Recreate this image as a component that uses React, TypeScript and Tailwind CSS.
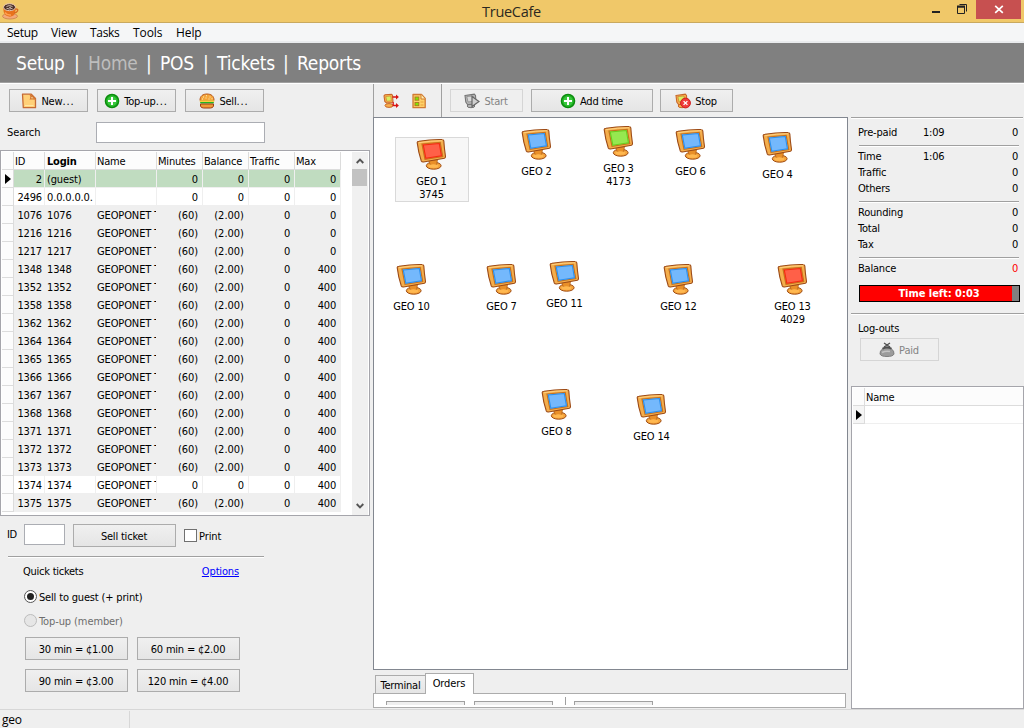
import React from "react";

type Kids = { children?: React.ReactNode };

function Monitor({ color }: { color: "red" | "blue" | "green" }) {
  const fills = {
    red: ["#ff6048", "#f42c10"],
    blue: ["#74b8fc", "#2a90f0"],
    green: ["#96e850", "#68cc20"],
  }[color];
  return (
    <svg width="32" height="32" viewBox="0 0 32 32" className="block shrink-0">
      <ellipse cx="17.700" cy="27.700" rx="7.400" ry="3.500" fill="#f5a53c" stroke="#a04c14" strokeWidth="1" />
      <path d="M12.500 22.500L21.500 21.500L20.500 27Q18 28.500 14.500 27Z" fill="#e98f28" stroke="#b8651a" strokeWidth=".8" />
      <ellipse cx="17.300" cy="28" rx="5" ry="1.800" fill="#ffb850" />
      <path d="M1.200 4.600Q1.200 3.400 3 3.200Q15 1.200 26 1.500Q27.500 1.500 27.800 2.800Q28.200 10 29.500 18.500Q29.500 19.900 28.400 20.200L7.500 24Q6 24.200 5.300 23Q2.300 14 1.200 4.600Z" fill="#f4ae4c" stroke="#9c4a16" strokeWidth="1.100" />
      <path d="M3 4.700Q15 2.600 26 2.800" stroke="#ffd080" strokeWidth="1" fill="none" />
      <path d="M6 6L24.200 4.300L26.700 18.500L9 21.400Z" fill={fills[0]} stroke="#c8721c" strokeWidth="1.200" />
      <path d="M7.300 7L23.300 5.500L25.400 17.700L9.800 20.200Z" fill={fills[0]} stroke={fills[1]} strokeWidth="1.100" />
    </svg>
  );
}

function PlusIcon() {
  return (
    <svg width="16" height="16" viewBox="0 0 16 16" className="shrink-0">
      <circle cx="8" cy="8" r="6.500" fill="#38c83c" stroke="#0a8c0c" strokeWidth="1.600" />
      <circle cx="8" cy="8" r="5.300" fill="none" stroke="#16a81a" strokeWidth=".8" />
      <path d="M8 4v8M4 8h8" stroke="#fff" strokeWidth="2" />
    </svg>
  );
}

function NoteIcon() {
  return (
    <svg width="16" height="16" viewBox="0 0 16 16" className="shrink-0">
      <path d="M1.500 1.200h8.800l4.200 4.200v9.300H2.300Z" fill="#ffd078" stroke="#c66a34" strokeWidth="1.300" strokeLinejoin="round" />
      <path d="M9 1.500q1.500 2 .5 4.500q2.500-.5 5 .3Z" fill="#fff0c0" stroke="#d57a34" strokeWidth="1.200" />
      <path d="M4 12.500h8.500" stroke="#ffe7a4" />
    </svg>
  );
}

function BurgerIcon() {
  return (
    <svg width="16" height="16" viewBox="0 0 16 16" className="shrink-0">
      <path d="M1 7.500C.8 3 4 1 8 1s7.200 2 7 6.500Z" fill="#f5a63a" stroke="#b85a20" />
      <path d="M4 4h1M7 2.700h1M10.500 4h1M6.500 5h1M12.500 5.700h1M3 6h1M9.500 6h1" stroke="#fff0bd" strokeWidth="1.100" />
      <rect x=".7" y="7.300" width="14.600" height="2" rx="1" fill="#f8cf40" />
      <rect x="1" y="8.900" width="14" height="1.600" rx=".8" fill="#22b520" />
      <path d="M1.500 11h13v2q-.5 2-3 2h-7q-2.500 0-3-2Z" fill="#f09a34" stroke="#9e3f16" />
    </svg>
  );
}

function MiniMonitor({ gray, green }: { gray?: boolean; green?: boolean }) {
  const a = gray ? "#b8b8b8" : "#f8b14e";
  const b = gray ? "#757575" : "#c8682a";
  const c = gray ? "#d8d8d8" : green ? "#d8f060" : "#ffd76c";
  return (
    <>
      <ellipse cx="7" cy="13" rx="3.900" ry="1.700" fill={a} stroke={b} />
      <path d="M1 2.500L10.300 1.200L11.500 2.500L12 9.500L10.500 11L3.500 11.500L1.800 9Z" fill={a} stroke={b} strokeWidth="1.100" />
      <path d="M2.800 3.500L9 3L9.800 8.300L4 9Z" fill={c} stroke={b} strokeWidth=".6" />
    </>
  );
}

function StartIcon() {
  return (
    <svg width="16" height="16" viewBox="0 0 16 16" className="shrink-0">
      <MiniMonitor gray />
      <path d="M8 3.500L15 8.500L8 13.500Z" fill="#d0d0d0" stroke="#666" strokeWidth="1.200" />
    </svg>
  );
}

function StopIcon() {
  return (
    <svg width="16" height="16" viewBox="0 0 16 16" className="shrink-0">
      <MiniMonitor green />
      <circle cx="10.500" cy="10" r="4.900" fill="#f03c3c" stroke="#d01c1c" />
      <path d="M8.600 8.100l3.800 3.800M12.400 8.100l-3.800 3.800" stroke="#fff" strokeWidth="1.300" />
    </svg>
  );
}

function TransferIcon() {
  return (
    <svg width="16" height="16" viewBox="0 0 16 16" className="shrink-0">
      <ellipse cx="6" cy="12.500" rx="4" ry="1.900" fill="#f8b14e" stroke="#c8682a" />
      <path d="M1 2.800L2 1.700L8.500 1.300L9.500 2.200L10 8.500L9 9.500L3.500 10L1.800 8.500Z" fill="#f8b14e" stroke="#c8682a" strokeWidth="1.100" />
      <path d="M2.800 3.500L7.800 3L8.300 7.800L3.800 8.300Z" fill="#d8f060" stroke="#c8682a" strokeWidth=".5" />
      <path d="M9.500 4h4.500M9.500 12.500h4.500M10.200 9v4" stroke="#d81414" strokeWidth="1.300" />
      <path d="M13 1.600L15.900 4L13 6.400ZM13 10.100L15.900 12.500L13 14.900Z" fill="#d81414" />
    </svg>
  );
}

function ReportIcon() {
  return (
    <svg width="16" height="16" viewBox="0 0 16 16" className="shrink-0">
      <path d="M2 1.500H10.500l3.700 4v9.200H2Z" fill="#ffd168" stroke="#d07a34" strokeWidth="1.300" strokeLinejoin="round" />
      <path d="M10 1.500v4.500h4" fill="#fff0b0" stroke="#d07a34" />
      <rect x="4" y="4" width="3.800" height="3.200" fill="#7fe800" stroke="#a87820" strokeWidth=".9" />
      <rect x="4" y="9.500" width="3.800" height="3.200" fill="#7fe800" stroke="#a87820" strokeWidth=".9" />
      <path d="M9.500 9h3M9.500 12h3" stroke="#e9a23c" />
    </svg>
  );
}

function PurseIcon() {
  return (
    <svg width="16" height="16" viewBox="0 0 16 16" className="shrink-0">
      <path d="M4 6.500Q.5 9 1 12Q2 14.500 8 14.500t7-2.500Q15.500 9 12 6.500Z" fill="#9c9c9c" stroke="#808080" />
      <path d="M3 10.500Q7 8.500 11 9.500" stroke="#c4c4c4" strokeWidth="1.500" fill="none" />
      <path d="M3.500 6.800Q8 3.500 12.500 6.800" stroke="#505050" strokeWidth="2" fill="none" />
      <path d="M5 1l6 4M11 1L5 5" stroke="#505050" strokeWidth="1.300" />
    </svg>
  );
}

function CupIcon() {
  return (
    <svg width="17" height="17" viewBox="0 0 17 17" className="shrink-0">
      <ellipse cx="8" cy="13.200" rx="7.500" ry="2.800" fill="#f4a878" stroke="#c27a48" strokeWidth=".7" />
      <path d="M1.500 5Q.8 10 4 12.500Q8 14.800 11.500 12.500Q14 10 13.500 5Z" fill="#e8721c" />
      <path d="M3 9.500Q5 12.500 9 12" stroke="#ffa050" strokeWidth="1.400" fill="none" />
      <path d="M13 6q3.500-.5 2.500 2q-1 2-3.500 2" fill="none" stroke="#d86a20" strokeWidth="1.500" />
      <ellipse cx="7.500" cy="4.200" rx="6" ry="3.500" fill="#4c3028" stroke="#e8c8b4" />
      <path d="M4.500 3.500q3-2 6 0M4.500 5.300q3 1.500 6 0M7 4.300h2" stroke="#d8c8c0" fill="none" strokeWidth=".9" />
    </svg>
  );
}

function Button({ w, disabled, children }: Kids & { w: string; disabled?: boolean }) {
  return (
    <button
      className={`flex h-[23px] shrink-0 items-center justify-center gap-[4px] border ${w} ${
        disabled ? "border-[#d5d5d5] bg-[#efefef] text-[#838383]" : "border-[#acacac] bg-linear-to-b from-[#f0f0f0] to-[#e5e5e5]"
      }`}
    >
      {children}
    </button>
  );
}

function Caption({ children, dots }: Kids & { dots?: boolean }) {
  return (
    <span className="pt-[3px] pr-px tracking-[-0.2px]">
      {children}
      {dots && <span className="tracking-[0.9px]">...</span>}
    </span>
  );
}

function Rule({ className = "" }: { className?: string }) {
  return <div className={`h-[2px] shrink-0 border-t border-b border-t-[#a0a0a0] border-b-white ${className}`} />;
}

function RowArrow() {
  return (
    <svg width="6" height="10" viewBox="0 0 6 10" className="block">
      <path d="M0 0L6 5L0 10Z" fill="#000" />
    </svg>
  );
}

const members: string[][] = [
  ["2", "(guest)", "", "0", "0", "0", "0"],
  ["2496", "0.0.0.0.0.", "", "0", "0", "0", "0"],
  ...["1076", "1216", "1217", "1348", "1352", "1358", "1362", "1364", "1365", "1366", "1367", "1368", "1371", "1372", "1373"].map(
    (id, i) => [id, id, "GEOPONET T", "(60)", "(2.00)", "0", i < 3 ? "0" : "400"],
  ),
  ["1374", "1374", "GEOPONET T", "0", "0", "0", "400"],
  ["1375", "1375", "GEOPONET T", "(60)", "(2.00)", "0", "400"],
];

const cols = "grid grid-cols-[12px_31px_51px_61px_46px_46px_46px_46px]";

const cellStyles = [
  "pr-[2px] text-right tracking-[-0.15px]",
  "pl-[2px] tracking-[-0.15px]",
  "pl-px tracking-[-0.12px]",
  "pr-[4px] text-right tracking-[-0.1px]",
  "pr-[4px] text-right tracking-[0px]",
  "pr-[4px] text-right tracking-[-0.2px]",
  "pr-[4px] text-right tracking-[-0.2px]",
];

function MemberTable() {
  return (
    <div className="flex h-[366px] w-[370px] border border-[#a5a5ab] bg-white pt-px pl-px">
      <div className="w-[339px] shrink-0">
        <div className={`${cols} h-[18px] border-b border-[#dcdcdc] bg-[#fcfcfc]`}>
          <div className="border-r border-[#dcdcdc]" />
          {["ID", "Login", "Name", "Minutes", "Balance", "Traffic", "Max"].map((h) => (
            <div key={h} className={`overflow-hidden border-r border-[#dcdcdc] leading-[20px] whitespace-nowrap ${h === "Login" ? "pl-[2px] font-bold tracking-[-0.2px]" : h === "Traffic" ? "pl-px tracking-[0px]" : "pl-px tracking-[-0.2px]"}`}>
              {h}
            </div>
          ))}
        </div>
        {members.map((row, r) => {
          const white = row[3] === "0";
          return (
            <div key={row[0]} className={`${cols} h-[18px]`}>
              <div className="flex items-center border-r border-b border-[#dcdcdc] bg-[#fcfcfc] pl-[3px]">{r === 0 && <RowArrow />}</div>
              {row.map((cell, c) => (
                <div
                  key={c}
                  className={`h-[18px] overflow-hidden border-r border-b border-[#efefef] leading-[20px] whitespace-nowrap ${
                    r === 0 ? "bg-[#c0dcc0]" : white ? "bg-white" : "bg-[#efefef]"
                  } ${cellStyles[c]}`}
                >
                  {cell}
                </div>
              ))}
            </div>
          );
        })}
      </div>
      <div className="ml-[11px] flex w-4 flex-col items-center bg-[#f0f0f0]">
        <div className="flex h-[17px] items-center">
          <svg width="8" height="6" viewBox="0 0 8 6"><path d="M.7 5L4 1.700L7.300 5" fill="none" stroke="#555" strokeWidth="1.900" /></svg>
        </div>
        <div className="h-[17px] w-[15px] self-start bg-[#c2c2c2]" />
        <div className="mt-auto mb-[6px]">
          <svg width="8" height="6" viewBox="0 0 8 6" className="block"><path d="M.7 1L4 4.300L7.300 1" fill="none" stroke="#555" strokeWidth="1.900" /></svg>
        </div>
      </div>
    </div>
  );
}

function LeftPanel() {
  return (
    <div className="flex h-full w-[373px] shrink-0 flex-col">
      <div className="flex gap-[9px] pt-[5px] pl-[9px]">
        <Button w="w-[79px]"><NoteIcon /><Caption dots>New</Caption></Button>
        <Button w="w-[79px]"><PlusIcon /><Caption dots>Top-up</Caption></Button>
        <Button w="w-[79px]"><BurgerIcon /><Caption dots>Sell</Caption></Button>
      </div>
      <div className="mt-[10px] flex h-[21px] items-center pl-[7px]">
        <span className="w-[89px] pt-px tracking-[-0.1px]">Search</span>
        <div className="h-[21px] w-[169px] border border-[#abadb3] bg-white" />
      </div>
      <div className="mt-[7px]"><MemberTable /></div>
      <div className="mt-2 flex h-[23px] items-start pl-[7px]">
        <span className="w-[17px] leading-[21px]">ID</span>
        <div className="mr-2 h-[21px] w-[41px] border border-[#abadb3] bg-white" />
        <Button w="w-[103px]"><Caption>Sell ticket</Caption></Button>
        <div className="mt-[5px] ml-2 size-[13px] border border-[#707070] bg-white" />
        <span className="ml-[2px] leading-[25px] tracking-[-0.1px]">Print</span>
      </div>
      <Rule className="mt-[9px] ml-2 w-[256px]" />
      <div className="mt-[6px] flex h-4 w-[239px] items-center justify-between pl-[23px]">
        <span className="tracking-[-0.25px]">Quick tickets</span>
        <span className="tracking-[-0.15px] text-[#0000ff] underline">Options</span>
      </div>
      <div className="mt-[9px] flex h-4 items-center gap-[2px] pl-[24px]">
        <div className="-mt-px flex size-[13px] items-center justify-center rounded-full border border-[#555] bg-white">
          <div className="size-[7px] rounded-full bg-[#222]" />
        </div>
        <span className="pt-[2px] tracking-[-0.17px]">Sell to guest (+ print)</span>
      </div>
      <div className="mt-2 flex h-4 items-center gap-[2px] pl-[24px] text-[#6d6d6d]">
        <div className="-mt-px size-[13px] rounded-full border border-[#bcbcbc] bg-[#e6e6e6]" />
        <span className="pt-[2px] tracking-[-0.1px]">Top-up (member)</span>
      </div>
      <div className="mt-2 grid w-[240px] grid-cols-2 gap-x-[9px] gap-y-[9px] pl-[25px]">
        <Button w="w-[103px]"><Caption>30 min = ¢1.00</Caption></Button>
        <div className="flex justify-end"><Button w="w-[103px]"><Caption>60 min = ¢2.00</Caption></Button></div>
        <Button w="w-[103px]"><Caption>90 min = ¢3.00</Caption></Button>
        <div className="flex justify-end"><Button w="w-[103px]"><Caption>120 min = ¢4.00</Caption></Button></div>
      </div>
    </div>
  );
}

type Station = { name: string; user?: string; x: number; y: number; color: "red" | "blue" | "green"; selected?: boolean };

const stations: Station[] = [
  { name: "GEO 1", user: "3745", x: 432, y: 138, color: "red", selected: true },
  { name: "GEO 2", x: 537, y: 128, color: "blue" },
  { name: "GEO 3", user: "4173", x: 619, y: 125, color: "green" },
  { name: "GEO 6", x: 691, y: 128, color: "blue" },
  { name: "GEO 4", x: 778, y: 131, color: "blue" },
  { name: "GEO 10", x: 412, y: 263, color: "blue" },
  { name: "GEO 7", x: 502, y: 263, color: "blue" },
  { name: "GEO 11", x: 565, y: 260, color: "blue" },
  { name: "GEO 12", x: 679, y: 263, color: "blue" },
  { name: "GEO 13", user: "4029", x: 793, y: 263, color: "red" },
  { name: "GEO 8", x: 557, y: 388, color: "blue" },
  { name: "GEO 14", x: 652, y: 393, color: "blue" },
];

function StationMap() {
  return (
    <div className="relative h-[553px] w-[475px] border border-[#828790] bg-white">
      {stations.map((s) => (
        <div
          key={s.name}
          className={`absolute flex w-[74px] flex-col items-center text-center leading-[13px] tracking-[-0.15px] ${
            s.selected ? "h-[65px] border border-[#d9d9d9] bg-[#f7f7f7]" : "border border-transparent"
          }`}
          style={{ left: s.x - 374 - 37, top: s.y - 118 - 1 }}
        >
          <Monitor color={s.color} />
          <div className="mt-[5px] pr-px">{s.name}</div>
          {s.user && <div className="pr-px">{s.user}</div>}
        </div>
      ))}
    </div>
  );
}

function Center() {
  return (
    <div className="flex w-[475px] shrink-0 flex-col">
      <div className="flex h-[33px] border-l border-[#a0a0a0]">
        <div className="flex w-[68px] items-center gap-3 border-r border-[#a0a0a0] pl-[9px]">
          <TransferIcon />
          <ReportIcon />
        </div>
        <div className="flex pt-[5px] pl-2">
          <Button w="mr-2 w-[73px]" disabled><StartIcon /><Caption>Start</Caption></Button>
          <Button w="mr-[7px] w-[122px]"><PlusIcon /><Caption>Add time</Caption></Button>
          <Button w="w-[73px]"><StopIcon /><Caption>Stop</Caption></Button>
        </div>
      </div>
      <StationMap />
      <div className="flex h-[23px] items-end pl-[2px]">
        <div className="h-[18px] w-[50px] border border-r-0 border-b-0 border-[#acacac] bg-linear-to-b from-[#f0f0f0] to-[#e5e5e5] text-center leading-[19px] tracking-[-0.2px]">Terminal</div>
        <div className="relative -mb-px h-[21px] w-[49px] border border-b-0 border-[#acacac] bg-white pr-px text-center leading-[19px] tracking-[-0.1px]">Orders</div>
      </div>
      <div className="flex h-[15px] w-[473px] items-start border border-[#acacac] bg-white pl-3">
        <div className="mt-[7px] h-1 w-[79px] border border-b-0 border-[#a0a0a0] bg-[#efefef]" />
        <div className="mt-[7px] ml-[9px] h-1 w-[79px] border border-b-0 border-[#a0a0a0] bg-[#efefef]" />
        <div className="mt-[3px] ml-3 h-2 w-px bg-[#a0a0a0]" />
        <div className="mt-[7px] ml-2 h-1 w-[79px] border border-b-0 border-[#a0a0a0] bg-[#efefef]" />
      </div>
    </div>
  );
}

function Line({ label, time, value, red }: { label: string; time?: string; value: string; red?: boolean }) {
  return (
    <div className="flex h-4 items-center pt-[2px] pr-[6px] pl-[7px] tracking-[-0.2px]">
      <span className="w-[65px]">{label}</span>
      <span>{time}</span>
      <span className={`ml-auto ${red ? "text-[#ff0000]" : ""}`}>{value}</span>
    </div>
  );
}

function RightPanel() {
  return (
    <div className="ml-[3px] flex w-[173px] flex-col pt-[33px]">
      <Rule className="w-[172px]" />
      <div className="h-[5px]" />
      <Line label="Pre-paid" time="1:09" value="0" />
      <Rule className="mt-[5px] mb-px ml-2 w-40" />
      <Line label="Time" time="1:06" value="0" />
      <Line label="Traffic" value="0" />
      <Line label="Others" value="0" />
      <Rule className="mt-[5px] mb-px ml-2 w-40" />
      <Line label="Rounding" value="0" />
      <Line label="Total" value="0" />
      <Line label="Tax" value="0" />
      <Rule className="mt-[5px] mb-px ml-2 w-40" />
      <Line label="Balance" value="0" red />
      <div className="mt-[9px] ml-2 h-[17px] w-[161px] border border-black bg-[#808080]">
        <div className="h-[15px] w-[152px] bg-[#ff0000] pl-[6px] text-center leading-[15px] font-bold tracking-[-0.04px] text-white">Time left: 0:03</div>
      </div>
      <Rule className="mt-[11px]" />
      <div className="mt-[5px] h-4 pt-px pl-[7px] leading-4 tracking-[-0.2px]">Log-outs</div>
      <div className="mt-[2px] pl-[9px]"><Button w="w-[79px]" disabled><PurseIcon /><Caption>Paid</Caption></Button></div>
      <div className="mt-[25px] h-[323px] border border-[#a5a5ab] bg-white pt-px pl-px">
        <div className="flex h-[18px] border-b border-[#dcdcdc] bg-[#fcfcfc]">
          <div className="w-3 border-r border-[#dcdcdc]" />
          <div className="pl-px leading-[20px] tracking-[-0.2px]">Name</div>
        </div>
        <div className="flex h-[18px]">
          <div className="flex w-3 items-center border-r border-b border-[#dcdcdc] bg-[#f5f5f5] pl-[3px]"><RowArrow /></div>
          <div className="flex-1 border-b border-[#efefef]" />
        </div>
      </div>
    </div>
  );
}

function TitleBar() {
  return (
    <div className="flex h-[23px] items-start border-b border-[#c9a95f] bg-[#f0c869]">
      <div className="w-[94px] pt-[3px] pl-[2px]"><CupIcon /></div>
      <div className="flex-1 text-center font-['Open_Sans','Noto_Sans',sans-serif] text-[14.500px] leading-[23px] tracking-[-0.3px] text-[#2c2820]">TrueCafe</div>
      <svg width="42" height="19" viewBox="0 0 42 19" className="mr-[3px] ml-[2px]">
        <path d="M1 11h8v2H1Z" fill="#222" />
        <path d="M28.500 4.500h7v7" fill="none" stroke="#222" />
        <path d="M26.500 7h7v6.500h-7Z" fill="none" stroke="#222" />
        <path d="M26 6.500h8" stroke="#222" strokeWidth="2" />
      </svg>
      <div className="mr-[3px] flex h-[19px] w-[45px] items-center justify-center bg-[#c75050]">
        <svg width="10" height="9" viewBox="0 0 10 9"><path d="M1.200 .8L8.800 7.800M8.800 .8L1.200 7.800" stroke="#fff" strokeWidth="1.700" /></svg>
      </div>
    </div>
  );
}

export default function App() {
  return (
    <div className="flex h-[728px] w-[1024px] flex-col overflow-hidden bg-[#efefef] font-['DejaVu_Sans_Condensed','DejaVu_Sans',sans-serif] text-[11px] tracking-[-0.3px] text-black">
      <TitleBar />
      <div className="flex h-5 border-b-2 border-[#e9ebed] bg-[#f5f6f7] pl-[7px] font-['Open_Sans','Noto_Sans',sans-serif] text-[12px] leading-[19px] tracking-[-0.1px]">
        <span className="w-[44px] tracking-[-0.3px]">Setup</span>
        <span className="w-[39px]">View</span>
        <span className="w-[43px] tracking-[-0.3px]">Tasks</span>
        <span className="w-[43px]">Tools</span>
        <span>Help</span>
      </div>
      <div className="flex h-[40px] border-b border-[#a0a0a0] bg-[#808080] pl-4 text-[19px] leading-[41px] tracking-[-0.2px] text-white">
        <span className="w-[58px]">Setup</span>
        <span className="w-[14px]">|</span>
        <span className="w-[58px] text-[#bdbdbd]">Home</span>
        <span className="w-[14px]">|</span>
        <span className="w-[43px]">POS</span>
        <span className="w-[14px]">|</span>
        <span className="w-[66px]">Tickets</span>
        <span className="w-[14px]">|</span>
        <span>Reports</span>
      </div>
      <div className="h-px bg-white" />
      <div className="flex h-[625px]">
        <LeftPanel />
        <Center />
        <RightPanel />
      </div>
      <div className="flex h-[19px] border-t border-[#d7d7d7]">
        <div className="mt-px w-[130px] border-r border-[#d7d7d7] pl-[2px] font-['Open_Sans','Noto_Sans',sans-serif] text-[12px] leading-[18px]">geo</div>
      </div>
    </div>
  );
}
